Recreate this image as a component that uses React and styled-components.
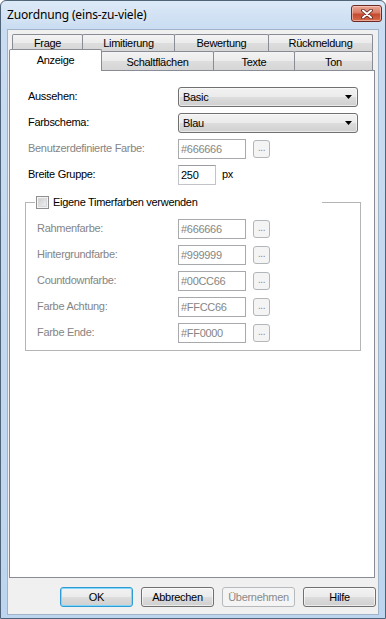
import React from 'react';
import styled, { createGlobalStyle } from 'styled-components';

const GlobalStyle = createGlobalStyle`
  html, body {
    margin: 0;
    padding: 0;
    background: #ffffff;
  }
  body {
    font-family: "Liberation Sans", Arial, sans-serif;
    font-size: 11px;
    letter-spacing: -0.3px;
    color: #000;
  }
  * {
    box-sizing: border-box;
  }
`;

const Window = styled.div`
  width: 386px;
  height: 619px;
  display: flex;
  flex-direction: column;
  border: 1px solid #4f6379;
  border-radius: 6px 6px 0 0;
  background: linear-gradient(180deg, #dce9f7 0, #c9dcf1 28px, #bdd5ee 100%);
  padding: 0 6px 3px;
  overflow: hidden;
`;

const TitleBar = styled.div`
  height: 28px;
  display: flex;
  justify-content: space-between;
  align-items: flex-start;
  margin: 0 -3px 0 0;
  padding-top: 4px;
`;

const Title = styled.span`
  font-family: "Noto Sans", "Open Sans", sans-serif;
  font-size: 12px;
  letter-spacing: -0.15px;
  line-height: 18px;
  color: #000;
  margin-top: 1px;
  text-shadow: 0 0 8px rgba(255, 255, 255, 0.9);
`;

const CloseButton = styled.div`
  width: 31px;
  height: 17px;
  border: 1px solid #6b2a22;
  border-radius: 3px;
  background: linear-gradient(180deg, #e9a999 0%, #d97c66 45%, #c54a30 55%, #d76a4c 100%);
  box-shadow: inset 0 0 0 1px rgba(255, 220, 210, 0.55);
  display: flex;
  align-items: center;
  justify-content: center;
`;

const DialogBody = styled.div`
  flex: 1;
  display: flex;
  flex-direction: column;
  background: #f0f0f0;
  border: 1px solid #9fb4c9;
  padding: 4px 2px 7px 1px;
`;

const TabRow = styled.div`
  display: flex;
  align-items: flex-end;
  height: ${(p) => p.$h}px;
  margin-left: ${(p) => p.$indent}px;
  margin-top: ${(p) => p.$top || 0}px;
`;

const Tab = styled.div`
  width: ${(p) => p.$w}px;
  height: ${(p) => p.$h}px;
  padding-top: ${(p) => p.$pad}px;
  border: 1px solid #898c95;
  border-bottom: none;
  border-radius: 2px 2px 0 0;
  background: linear-gradient(180deg, #f3f3f3 0%, #ebebeb 50%, #dddddd 51%, #d6d6d6 100%);
  text-align: center;
  line-height: 13px;
  white-space: nowrap;
  & + & {
    margin-left: -1px;
  }
`;

const ActiveTab = styled(Tab)`
  position: relative;
  z-index: 1;
  background: #ffffff;
  margin-bottom: -1px;
`;

const TabPage = styled.div`
  flex: 1;
  margin-right: 1px;
  background: #ffffff;
  border: 1px solid #898c95;
  padding: 16px 0 0 15px;
`;

const FormGrid = styled.div`
  display: grid;
  grid-template-columns: ${(p) => p.$label}px auto;
  grid-auto-rows: 20px;
  row-gap: 6px;
  align-items: center;
  padding-left: ${(p) => p.$indent || 0}px;
`;

const Label = styled.span`
  color: ${(p) => (p.$disabled ? '#858585' : '#000')};
  line-height: 13px;
  margin-top: -1px;
`;

const Controls = styled.div`
  display: flex;
  align-items: center;
`;

const Combo = styled.div`
  width: 180px;
  height: 20px;
  border: 1px solid #707070;
  border-radius: 3px;
  background: linear-gradient(180deg, #f2f2f2 0%, #ebebeb 50%, #dddddd 51%, #cfcfcf 100%);
  box-shadow: inset 0 0 0 1px rgba(255, 255, 255, 0.55);
  display: flex;
  align-items: center;
  justify-content: space-between;
  padding: 0 5px 0 4px;
`;

const TextBox = styled.div`
  width: ${(p) => p.$w}px;
  height: 20px;
  border: 1px solid ${(p) => (p.$disabled ? '#a7a9ad' : '#c2c4c9')};
  border-top-color: ${(p) => (p.$disabled ? '#a7a9ad' : '#9a9ca2')};
  background: #ffffff;
  color: ${(p) => (p.$disabled ? '#858585' : '#000')};
  padding: 0 2px;
  display: flex;
  align-items: center;
`;

const DotsButton = styled.div`
  width: 17px;
  height: 18px;
  margin-left: 7px;
  border: 1px solid #b3b6b9;
  border-radius: 3px;
  background: #f4f4f4;
  color: #8a8a8a;
  font-size: 10px;
  line-height: 13px;
  text-align: center;
  letter-spacing: -0.5px;
`;

const Unit = styled.span`
  margin-left: 6px;
  margin-top: -2px;
`;

const GroupBox = styled.fieldset`
  width: 336px;
  margin: 11px 0 0 0;
  padding: 10px 0 7px 11px;
  border: 1px solid #b5b5b5;
  border-radius: 0;
`;

const GroupTitle = styled.legend`
  width: 287px;
  margin-left: -2px;
  padding: 0 0 0 1px;
  display: flex;
  align-items: center;
  gap: 4px;
  height: 13px;
  line-height: 13px;
`;

const CheckBox = styled.span`
  width: 13px;
  height: 13px;
  border: 1px solid #8f8f8f;
  background: linear-gradient(135deg, #c4c6c9 0%, #e4e5e6 60%, #f2f2f2 100%);
  box-shadow: inset 0 0 0 1px #f4f4f4, inset 0 0 0 2px #d9d9d9;
  flex: none;
`;

const Footer = styled.div`
  display: flex;
  justify-content: flex-end;
  gap: 8px;
  margin-top: 9px;
`;

const Button = styled.div`
  width: 73px;
  height: 20px;
  border: 1px solid ${(p) => (p.$default ? '#2f9bd4' : p.$disabled ? '#b7babd' : '#707070')};
  border-radius: 3px;
  background: ${(p) =>
    p.$disabled
      ? '#f4f4f4'
      : 'linear-gradient(180deg, #f2f2f2 0%, #ebebeb 50%, #dddddd 51%, #cfcfcf 100%)'};
  box-shadow: ${(p) =>
    p.$default
      ? 'inset 0 0 0 1px #7fd8fb'
      : p.$disabled
      ? 'none'
      : 'inset 0 0 0 1px rgba(255,255,255,0.6)'};
  color: ${(p) => (p.$disabled ? '#8a8a8a' : '#000')};
  display: flex;
  align-items: center;
  justify-content: center;
  line-height: 13px;
`;

const CloseGlyph = () => (
  <svg width="12" height="10" viewBox="0 0 12 10">
    <path d="M2 1.5 L10 8.5 M10 1.5 L2 8.5" stroke="#5a2018" strokeWidth="3.6" strokeLinecap="round" />
    <path d="M2 1.5 L10 8.5 M10 1.5 L2 8.5" stroke="#ffffff" strokeWidth="2" strokeLinecap="round" />
  </svg>
);

const ComboArrow = () => (
  <svg width="7" height="4" viewBox="0 0 7 4">
    <path d="M0 0 H7 L3.5 4 Z" fill="#000" />
  </svg>
);

const backTabs = [
  ['Frage', 71],
  ['Limitierung', 93],
  ['Bewertung', 95],
  ['Rückmeldung', 105],
];

const frontTabs = [
  ['Schaltflächen', 113],
  ['Texte', 82],
  ['Ton', 79],
];

const timerColors = [
  ['Rahmenfarbe:', '#666666'],
  ['Hintergrundfarbe:', '#999999'],
  ['Countdownfarbe:', '#00CC66'],
  ['Farbe Achtung:', '#FFCC66'],
  ['Farbe Ende:', '#FF0000'],
];

export default function App() {
  return (
    <>
      <GlobalStyle />
      <Window>
        <TitleBar>
          <Title>Zuordnung (eins-zu-viele)</Title>
          <CloseButton>
            <CloseGlyph />
          </CloseButton>
        </TitleBar>
        <DialogBody>
          <TabRow $h={17} $indent={3}>
            {backTabs.map(([name, w]) => (
              <Tab key={name} $w={w} $h={17} $pad={2}>
                {name}
              </Tab>
            ))}
          </TabRow>
          <TabRow $h={21} $indent={0} $top={-2}>
            <ActiveTab $w={93} $h={22} $pad={4}>
              Anzeige
            </ActiveTab>
            {frontTabs.map(([name, w]) => (
              <Tab key={name} $w={w} $h={19} $pad={4}>
                {name}
              </Tab>
            ))}
          </TabRow>
          <TabPage>
            <FormGrid $label={150} $indent={3}>
              <Label>Aussehen:</Label>
              <Combo>
                <span>Basic</span>
                <ComboArrow />
              </Combo>
              <Label>Farbschema:</Label>
              <Combo>
                <span>Blau</span>
                <ComboArrow />
              </Combo>
              <Label $disabled>Benutzerdefinierte Farbe:</Label>
              <Controls>
                <TextBox $w={68} $disabled>#666666</TextBox>
                <DotsButton>...</DotsButton>
              </Controls>
              <Label>Breite Gruppe:</Label>
              <Controls>
                <TextBox $w={38}>250</TextBox>
                <Unit>px</Unit>
              </Controls>
            </FormGrid>
            <GroupBox>
              <GroupTitle>
                <CheckBox />
                <span>Eigene Timerfarben verwenden</span>
              </GroupTitle>
              <FormGrid $label={141}>
                {timerColors.map(([label, value]) => (
                  <React.Fragment key={label}>
                    <Label $disabled>{label}</Label>
                    <Controls>
                      <TextBox $w={68} $disabled>{value}</TextBox>
                      <DotsButton>...</DotsButton>
                    </Controls>
                  </React.Fragment>
                ))}
              </FormGrid>
            </GroupBox>
          </TabPage>
          <Footer>
            <Button $default>OK</Button>
            <Button>Abbrechen</Button>
            <Button $disabled>Übernehmen</Button>
            <Button>Hilfe</Button>
          </Footer>
        </DialogBody>
      </Window>
    </>
  );
}
